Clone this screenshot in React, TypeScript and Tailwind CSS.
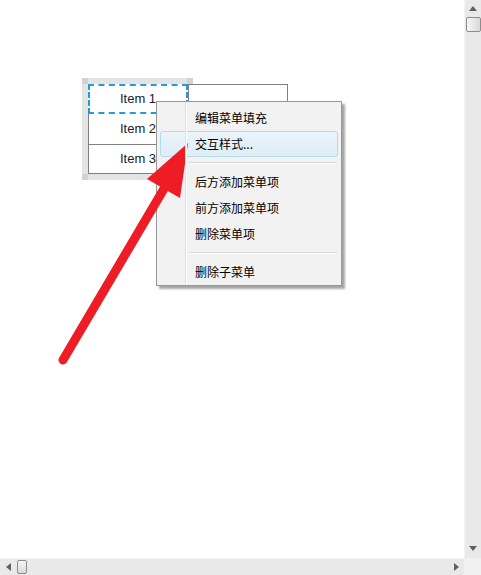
import React from "react";

const items: (string | null)[] = [
  "编辑菜单填充",
  "交互样式...",
  null,
  "后方添加菜单项",
  "前方添加菜单项",
  "删除菜单项",
  null,
  "删除子菜单",
];

function Arrow({ dir }: { dir: "up" | "down" | "left" | "right" }) {
  const pts = {
    up: "0,5 4,0 8,5",
    down: "0,0 8,0 4,5",
    left: "5,0 5,8 0,4",
    right: "0,0 0,8 5,4",
  }[dir];
  const vertical = dir === "up" || dir === "down";
  return (
    <svg width={vertical ? 8 : 5} height={vertical ? 5 : 8} viewBox={vertical ? "0 0 8 5" : "0 0 5 8"}>
      <polygon points={pts} fill="#606060" />
    </svg>
  );
}

function ContextMenu() {
  return (
    <div className="absolute left-[156px] top-[101px] w-[186px] h-[185px] border border-[#979797] bg-[#f2f2f2] pt-[3px] shadow-[3px_3px_2px_rgba(0,0,0,0.35)] font-['Noto_Sans_CJK_SC',sans-serif] text-[12px] text-black">
      {/* icon column divider */}
      <div className="absolute left-[28px] top-0 bottom-0 w-[1px] bg-[#e0e0e0] z-10" />
      <div className="absolute left-[29px] top-0 bottom-0 w-[1px] bg-white z-10" />
      {items.map((label, i) =>
        label === null ? (
          <div key={i} className="h-[12px] flex flex-col justify-center pl-[32px] pr-[4px]">
            <div className="h-[1px] bg-[#d7d7d7]" />
            <div className="h-[1px] bg-white" />
          </div>
        ) : (
          <div key={i} className="h-[26px] px-[3px]">
            <div
              className={`h-full flex items-center pl-[34px] rounded-[3px] border ${
                i === 1
                  ? "border-[#b4dbee] bg-gradient-to-b from-[#ebf4fa] to-[#dfedf5]"
                  : "border-transparent"
              }`}
            >
              {label}
            </div>
          </div>
        )
      )}
    </div>
  );
}

function GridTable() {
  return (
    <div className="flex items-start pl-[82px] pt-[78px] font-['Liberation_Sans',Arial,sans-serif] text-[13px] text-[#222]">
      <div className="relative bg-[#e4e4e4] pt-[6px] pl-[6px] pr-[5px] pb-[6px]">
        <div className="absolute left-0 top-0 w-[6px] h-[6px] bg-[#d2d2d2]" />
        <div className="absolute right-0 top-0 w-[6px] h-[6px] bg-[#d2d2d2]" />
        <div className="absolute left-0 bottom-0 w-[6px] h-[6px] bg-[#d2d2d2]" />
        <div className="absolute right-0 bottom-0 w-[6px] h-[6px] bg-[#d2d2d2]" />
        <div className="relative w-[100px] bg-white">
          <div className="h-[30px] flex items-center justify-center border-2 border-dashed border-[#229bd6]">
            Item 1
          </div>
          <div className="h-[30px] flex items-center justify-center border-x border-[#808080]">Item 2</div>
          <div className="h-[30px] flex items-center justify-center border border-[#808080]">Item 3</div>
        </div>
      </div>
      <div className="relative -ml-[5px] mt-[6px] w-[100px] h-[30px] border border-[#808080] bg-white" />
    </div>
  );
}

export default function App() {
  return (
    <div className="w-[481px] h-[575px] bg-white flex flex-col overflow-hidden">
      <div className="flex flex-1">
        <div className="relative flex-1">
          <GridTable />
          <ContextMenu />
          <svg className="absolute left-0 top-0 pointer-events-none" width="464" height="558">
            <line x1="63" y1="360" x2="165" y2="187" stroke="#ee1c25" strokeWidth="9" strokeLinecap="round" />
            <polygon points="188,143 147,179 180,198" fill="#ee1c25" />
          </svg>
        </div>
        {/* vertical scrollbar */}
        <div className="w-[17px] bg-[#e9e9e9] border-l border-[#f4f4f4] flex flex-col items-center">
          <div className="h-[16px] flex items-center justify-center">
            <Arrow dir="up" />
          </div>
          <div className="w-[15px] h-[15px] mt-[1px] rounded-[2px] border border-[#8c8c8c] bg-gradient-to-r from-[#f6f6f6] to-[#d9d9d9]" />
          <div className="flex-1" />
          <div className="h-[20px] flex items-center justify-center">
            <Arrow dir="down" />
          </div>
        </div>
      </div>
      {/* horizontal scrollbar */}
      <div className="h-[17px] flex">
        <div className="flex-1 bg-[#e9e9e9] border-t border-[#f4f4f4] flex items-center">
          <div className="w-[16px] flex justify-center">
            <Arrow dir="left" />
          </div>
          <div className="w-[10px] h-[14px] ml-[1px] rounded-[2px] border border-[#8c8c8c] bg-gradient-to-b from-[#f6f6f6] to-[#d9d9d9]" />
          <div className="flex-1" />
          <div className="w-[16px] flex justify-center">
            <Arrow dir="right" />
          </div>
        </div>
        <div className="w-[17px] bg-[#f0f0f0]" />
      </div>
    </div>
  );
}
